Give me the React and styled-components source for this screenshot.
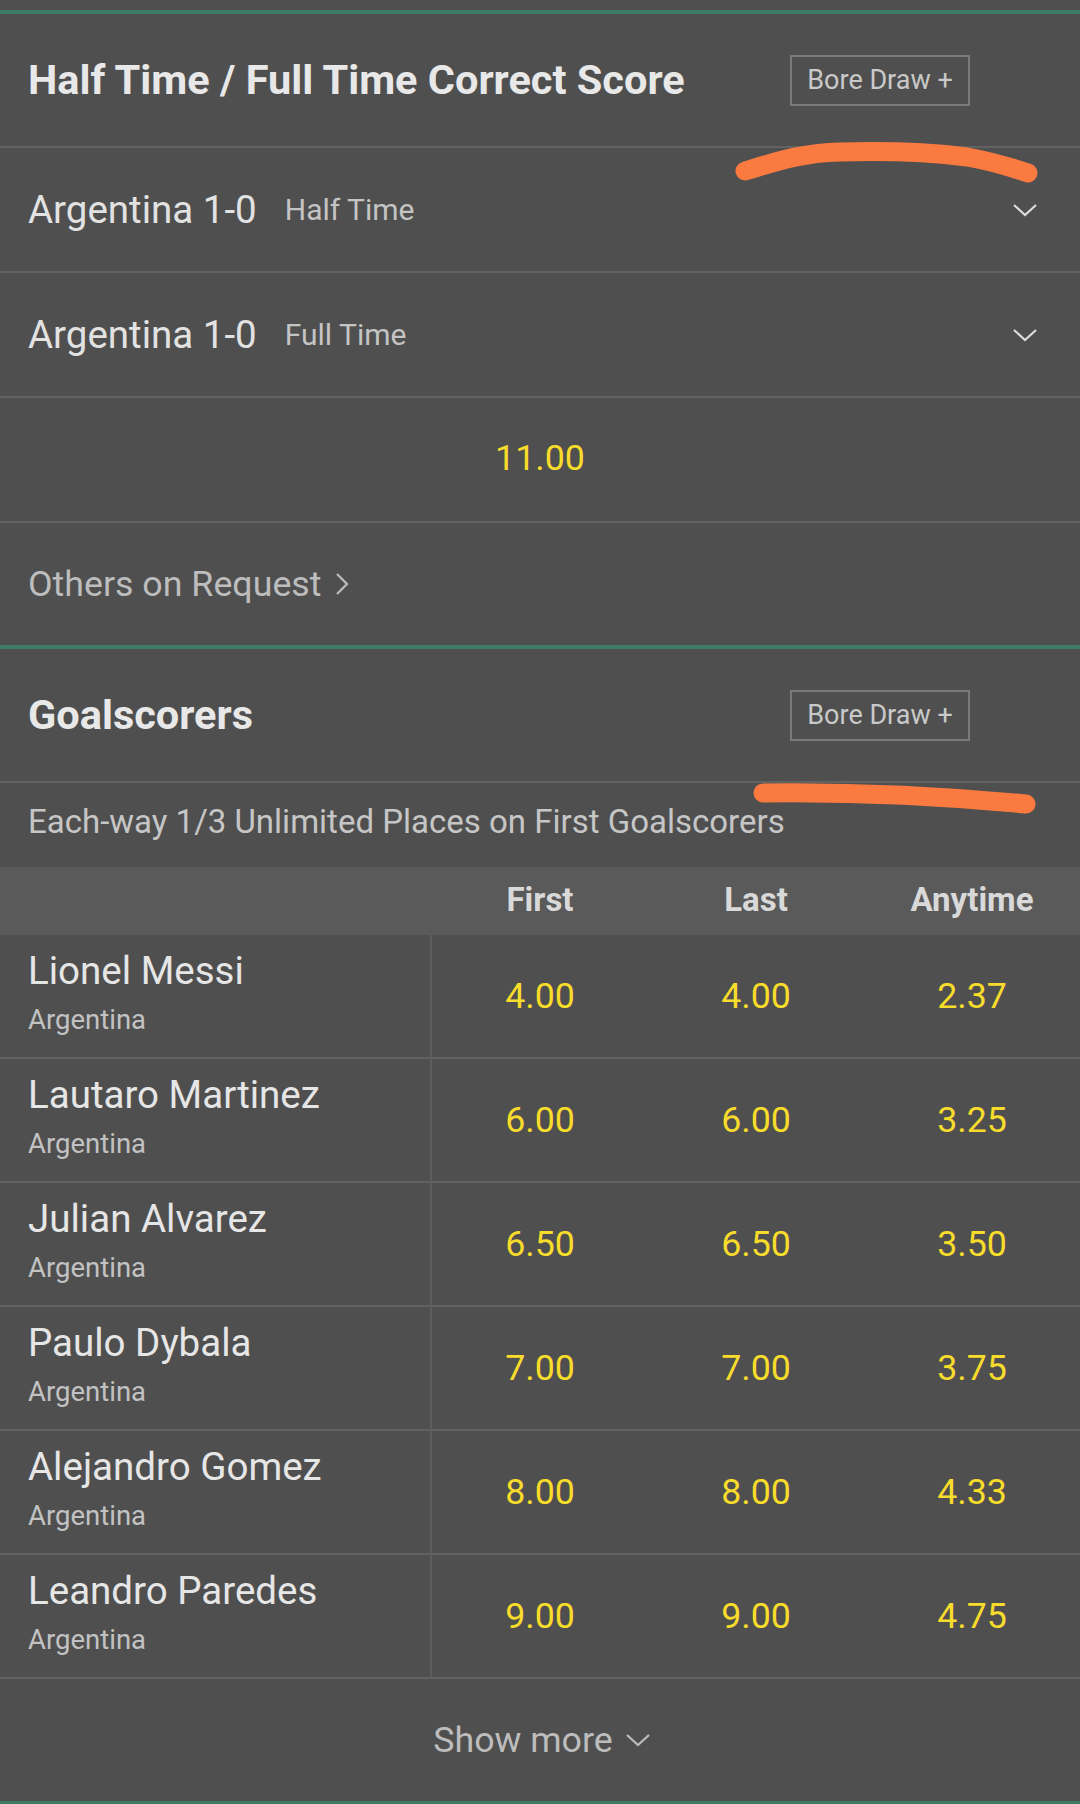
import React from "react";
import styled, { createGlobalStyle } from "styled-components";

const scorers = [
  { name: "Lionel Messi", team: "Argentina", odds: ["4.00", "4.00", "2.37"] },
  { name: "Lautaro Martinez", team: "Argentina", odds: ["6.00", "6.00", "3.25"] },
  { name: "Julian Alvarez", team: "Argentina", odds: ["6.50", "6.50", "3.50"] },
  { name: "Paulo Dybala", team: "Argentina", odds: ["7.00", "7.00", "3.75"] },
  { name: "Alejandro Gomez", team: "Argentina", odds: ["8.00", "8.00", "4.33"] },
  { name: "Leandro Paredes", team: "Argentina", odds: ["9.00", "9.00", "4.75"] },
];

const ChevronDown = ({ color = "#dcdcdc" }) => (
  <svg width="26" height="14" viewBox="0 0 26 14">
    <polyline points="2,2 13,12 24,2" fill="none" stroke={color} strokeWidth="2.2" />
  </svg>
);

const ChevronRight = () => (
  <svg width="14" height="24" viewBox="0 0 14 24">
    <polyline points="2,2 12,12 2,22" fill="none" stroke="#bdbdbd" strokeWidth="2.2" />
  </svg>
);

const App = () => {
  return (
    <Page>
      <GlobalStyle />
      <Market>
        <MarketHeader>
          <Title>Half Time / Full Time Correct Score</Title>
          <BoreButton>Bore Draw +</BoreButton>
        </MarketHeader>
        <SelectRow>
          <Score>Argentina 1-0</Score>
          <Period>Half Time</Period>
          <Caret>
            <ChevronDown />
          </Caret>
        </SelectRow>
        <SelectRow>
          <Score>Argentina 1-0</Score>
          <Period>Full Time</Period>
          <Caret>
            <ChevronDown />
          </Caret>
        </SelectRow>
        <OddsRow>
          <Odd>11.00</Odd>
        </OddsRow>
        <LinkRow>
          Others on Request
          <ChevronRight />
        </LinkRow>
      </Market>

      <Market $last>
        <MarketHeader>
          <Title>Goalscorers</Title>
          <BoreButton>Bore Draw +</BoreButton>
        </MarketHeader>
        <Note>Each-way 1/3 Unlimited Places on First Goalscorers</Note>
        <TableHead>
          <span />
          <HeadCell>First</HeadCell>
          <HeadCell>Last</HeadCell>
          <HeadCell>Anytime</HeadCell>
        </TableHead>
        {scorers.map((p) => (
          <PlayerRow key={p.name}>
            <PlayerCell>
              <PlayerName>{p.name}</PlayerName>
              <PlayerTeam>{p.team}</PlayerTeam>
            </PlayerCell>
            {p.odds.map((o, i) => (
              <OddCell key={i}>
                <Odd>{o}</Odd>
              </OddCell>
            ))}
          </PlayerRow>
        ))}
        <ShowMore>
          Show more
          <ChevronDown color="#bdbdbd" />
        </ShowMore>
      </Market>

      <Scribbles width="1080" height="1804" viewBox="0 0 1080 1804">
        <path
          d="M745 171 C 775 162, 800 153, 840 152 C 880 151, 920 151, 967 157 C 990 161, 1010 167, 1028 173"
          fill="none"
          stroke="#fb7a40"
          strokeWidth="19"
          strokeLinecap="round"
        />
        <path
          d="M763 793 C 840 792, 940 796, 1026 804"
          fill="none"
          stroke="#fb7a40"
          strokeWidth="19"
          strokeLinecap="round"
        />
      </Scribbles>
    </Page>
  );
};

export default App;

const GlobalStyle = createGlobalStyle`
  body {
    margin: 0;
    background: #4f4f4f;
    font-family: Roboto, "Liberation Sans", sans-serif;
  }
`;

const Page = styled.div`
  position: relative;
  width: 1080px;
  padding-top: 10px;
  background: #4f4f4f;
`;

const Market = styled.section`
  border-top: 4px solid #3e7b64;
  border-bottom: ${(p) => (p.$last ? "4px solid #3e7b64" : "none")};
`;

const MarketHeader = styled.div`
  display: grid;
  grid-template-columns: 1fr 180px;
  align-items: center;
  height: 132px;
  padding: 0 110px 0 28px;
  border-bottom: 2px solid #626262;
`;

const Title = styled.h2`
  margin: 0;
  margin-top: -2px;
  font-size: 41.5px;
  font-weight: 700;
  color: #e8e8e8;
`;

const BoreButton = styled.button`
  box-sizing: border-box;
  height: 51px;
  width: 180px;
  border: 2px solid #7a7a7a;
  background: transparent;
  color: #c9c9c9;
  font-family: Roboto, "Liberation Sans", sans-serif;
  font-size: 27px;
  padding: 0;
`;

const SelectRow = styled.div`
  display: flex;
  align-items: center;
  height: 123px;
  padding: 0 42px 0 28px;
  border-bottom: 2px solid #626262;
`;

const Score = styled.span`
  font-size: 38.5px;
  color: #e2e2e2;
`;

const Period = styled.span`
  margin-left: 28px;
  font-size: 30px;
  color: #c4c4c4;
`;

const Caret = styled.span`
  margin-left: auto;
  display: flex;
`;

const OddsRow = styled.div`
  display: flex;
  align-items: center;
  justify-content: center;
  height: 125px;
  padding-bottom: 3px;
  box-sizing: border-box;
  border-bottom: 2px solid #626262;
`;

const Odd = styled.span`
  font-size: 35.75px;
  color: #f8dc2c;
`;

const LinkRow = styled.div`
  display: flex;
  align-items: center;
  gap: 13px;
  height: 122px;
  padding-left: 28px;
  font-size: 35.75px;
  color: #bdbdbd;
`;

const Note = styled.div`
  height: 84px;
  box-sizing: border-box;
  padding: 19px 28px 0;
  font-size: 33px;
  line-height: 40px;
  color: #c6c6c6;
`;

const TableHead = styled.div`
  display: grid;
  grid-template-columns: 432px 1fr 1fr 1fr;
  align-items: center;
  height: 68px;
  padding-bottom: 3px;
  box-sizing: border-box;
  background: #5a5a5a;
`;

const HeadCell = styled.span`
  text-align: center;
  font-size: 33px;
  font-weight: 700;
  color: #d9d9d9;
`;

const PlayerRow = styled.div`
  display: grid;
  grid-template-columns: 432px 1fr 1fr 1fr;
  height: 124px;
  box-sizing: border-box;
  border-bottom: 2px solid #626262;
`;

const PlayerCell = styled.div`
  display: flex;
  flex-direction: column;
  gap: 9px;
  padding: 13px 0 0 28px;
  border-right: 2px solid #5c5c5c;
`;

const PlayerName = styled.span`
  font-size: 38.5px;
  line-height: 46px;
  color: #e6e6e6;
`;

const PlayerTeam = styled.span`
  font-size: 27.5px;
  line-height: 34px;
  color: #c2c2c2;
`;

const OddCell = styled.div`
  display: flex;
  align-items: center;
  justify-content: center;
`;

const ShowMore = styled.div`
  display: flex;
  align-items: center;
  justify-content: center;
  gap: 12px;
  height: 122px;
  font-size: 35.75px;
  color: #bdbdbd;
  padding-left: 4px;
`;

const Scribbles = styled.svg`
  position: absolute;
  top: 0;
  left: 0;
  pointer-events: none;
`;
